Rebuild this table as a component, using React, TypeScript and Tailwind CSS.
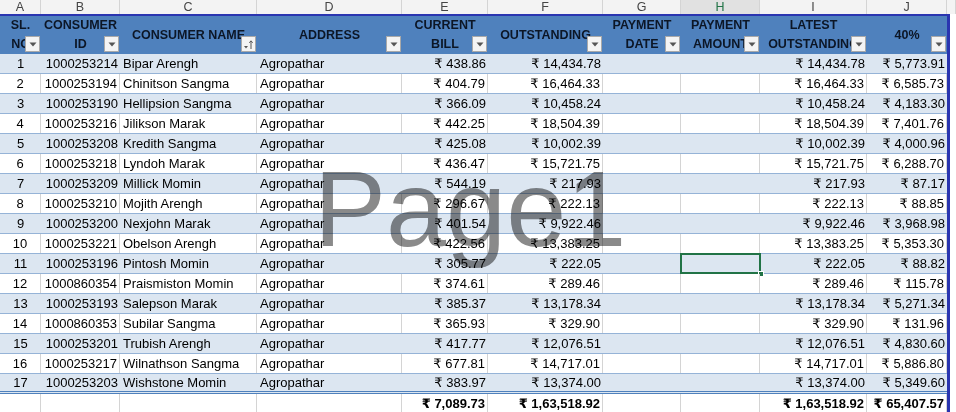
import React from 'react';

const colLetters = ['A', 'B', 'C', 'D', 'E', 'F', 'G', 'H', 'I', 'J', ''];

const rows: [string, string, string, string, string][] = [
  ['1000253214', 'Bipar Arengh', '438.86', '14,434.78', '5,773.91'],
  ['1000253194', 'Chinitson Sangma', '404.79', '16,464.33', '6,585.73'],
  ['1000253190', 'Hellipsion Sangma', '366.09', '10,458.24', '4,183.30'],
  ['1000253216', 'Jilikson Marak', '442.25', '18,504.39', '7,401.76'],
  ['1000253208', 'Kredith Sangma', '425.08', '10,002.39', '4,000.96'],
  ['1000253218', 'Lyndoh Marak', '436.47', '15,721.75', '6,288.70'],
  ['1000253209', 'Millick Momin', '544.19', '217.93', '87.17'],
  ['1000253210', 'Mojith Arengh', '296.67', '222.13', '88.85'],
  ['1000253200', 'Nexjohn Marak', '401.54', '9,922.46', '3,968.98'],
  ['1000253221', 'Obelson Arengh', '422.56', '13,383.25', '5,353.30'],
  ['1000253196', 'Pintosh Momin', '305.77', '222.05', '88.82'],
  ['1000860354', 'Praismiston Momin', '374.61', '289.46', '115.78'],
  ['1000253193', 'Salepson Marak', '385.37', '13,178.34', '5,271.34'],
  ['1000860353', 'Subilar Sangma', '365.93', '329.90', '131.96'],
  ['1000253201', 'Trubish Arengh', '417.77', '12,076.51', '4,830.60'],
  ['1000253217', 'Wilnathson Sangma', '677.81', '14,717.01', '5,886.80'],
  ['1000253203', 'Wishstone Momin', '383.97', '13,374.00', '5,349.60'],
];

const GRID = 'grid grid-cols-[41px_79px_137px_145px_86px_115px_78px_79px_107px_80px]';

function FilterButton({ sorted }: { sorted?: boolean }) {
  return (
    <div className="absolute bottom-[2px] right-[1px] flex h-[16px] w-[15px] items-center justify-center border border-[#a9a9a9] bg-[#f4f4f4]">
      {sorted ? (
        <svg width="11" height="11" viewBox="0 0 11 11">
          <path d="M1 7h4l-2 2.5z" fill="#555" />
          <path d="M8 10V2M6.3 3.8 8 1.8l1.7 2" stroke="#555" strokeWidth="1" fill="none" />
        </svg>
      ) : (
        <svg width="8" height="5" viewBox="0 0 8 5">
          <path d="M0.5 0.5h7L4 4.5z" fill="#555" />
        </svg>
      )}
    </div>
  );
}

function HeadCell({ lines, sorted }: { lines: string[]; sorted?: boolean }) {
  return (
    <div className="relative flex flex-col items-center justify-center overflow-hidden whitespace-nowrap text-center font-bold leading-[19px] text-[#0c1626]">
      {lines.map((l) => (
        <span key={l}>{l}</span>
      ))}
      <FilterButton sorted={sorted} />
    </div>
  );
}

function Cell({
  children,
  align = 'left',
  grid,
  bold,
}: {
  children?: React.ReactNode;
  align?: 'left' | 'right' | 'center';
  grid?: boolean;
  bold?: boolean;
}) {
  const a = align === 'right' ? 'justify-end pr-[2px]' : align === 'center' ? 'justify-center' : 'justify-start pl-[3px]';
  return (
    <div
      className={`flex items-center overflow-hidden whitespace-nowrap ${a} ${grid ? 'border-r border-[#d4d4d4]' : ''} ${
        bold ? 'font-bold' : ''
      }`}
    >
      {children}
    </div>
  );
}

export default function App() {
  return (
    <div className="relative isolate h-[412px] w-[956px] overflow-hidden bg-white text-[13px] text-black [font-family:'Liberation_Sans','DejaVu_Sans',sans-serif]">
      {/* column letters */}
      <div className="grid h-[14px] grid-cols-[41px_79px_137px_145px_86px_115px_78px_79px_107px_80px_1fr] bg-[#f3f3f3] text-[12.5px] leading-[14px] text-[#444]">
        {colLetters.map((l, i) => (
          <div
            key={i}
            className={`border-r border-[#d4d4d4] text-center ${
              l === 'H' ? 'border-b-2 border-b-[#217346] bg-[#e1e1e1] text-[#217346]' : ''
            }`}
          >
            {l}
          </div>
        ))}
      </div>

      <div className="flex">
        <div className="w-[947px] border-t-2 border-[#2a35b0]">
          {/* header */}
          <div className={`${GRID} h-[38px] bg-[#4f81bd] text-[12.5px]`}>
            <HeadCell lines={['SL.', 'NO']} />
            <HeadCell lines={['CONSUMER', 'ID']} />
            <HeadCell lines={['CONSUMER NAME']} sorted />
            <HeadCell lines={['ADDRESS']} />
            <HeadCell lines={['CURRENT', 'BILL']} />
            <HeadCell lines={['OUTSTANDING']} />
            <HeadCell lines={['PAYMENT', 'DATE']} />
            <HeadCell lines={['PAYMENT', 'AMOUNT']} />
            <HeadCell lines={['LATEST', 'OUTSTANDING']} />
            <HeadCell lines={['40%']} />
          </div>

          {/* data rows */}
          {rows.map(([id, name, bill, out, pct], i) => {
            const banded = i % 2 === 0;
            const last = i === rows.length - 1;
            const g = !banded;
            return (
              <div
                key={id}
                className={`${GRID} h-[20px] ${banded ? 'bg-[#dce6f1]' : 'bg-white'} ${
                  last ? 'border-b-[3px] border-double border-[#4f81bd]' : 'border-b border-[#95b3d7]'
                }`}
              >
                <Cell align="center" grid={g}>{i + 1}</Cell>
                <Cell align="right" grid={g}>{id}</Cell>
                <Cell grid={g}>{name}</Cell>
                <Cell grid={g}>Agropathar</Cell>
                <Cell align="right" grid={g}>₹ {bill}</Cell>
                <Cell align="right" grid={g}>₹ {out}</Cell>
                <Cell grid={g} />
                <div className={`relative ${g ? 'border-r border-[#d4d4d4]' : ''}`}>
                  {i === 10 && (
                    <>
                      <div className="absolute -inset-y-[1px] -left-[1px] -right-[1px] border-2 border-[#217346]" />
                      <div className="absolute -bottom-[4px] -right-[4px] h-[6px] w-[6px] border border-white bg-[#217346]" />
                    </>
                  )}
                </div>
                <Cell align="right" grid={g}>₹ {out}</Cell>
                <Cell align="right" grid={g}>₹ {pct}</Cell>
              </div>
            );
          })}

          {/* totals */}
          <div className={`${GRID} h-[20px] bg-white`}>
            <Cell grid />
            <Cell grid />
            <Cell grid />
            <Cell grid />
            <Cell align="right" grid bold>₹ 7,089.73</Cell>
            <Cell align="right" grid bold>₹ 1,63,518.92</Cell>
            <Cell grid />
            <Cell grid />
            <Cell align="right" grid bold>₹ 1,63,518.92</Cell>
            <Cell align="right" grid bold>₹ 65,407.57</Cell>
          </div>
        </div>
        <div className="w-[3px] bg-[#2a35b0]" />
        <div className="flex-1 bg-white" />
      </div>

      {/* page watermark */}
      <div className="pointer-events-none absolute left-[314px] top-[155px] text-[108px] leading-none text-[#8a8a8a] mix-blend-multiply">
        Page1
      </div>
    </div>
  );
}
